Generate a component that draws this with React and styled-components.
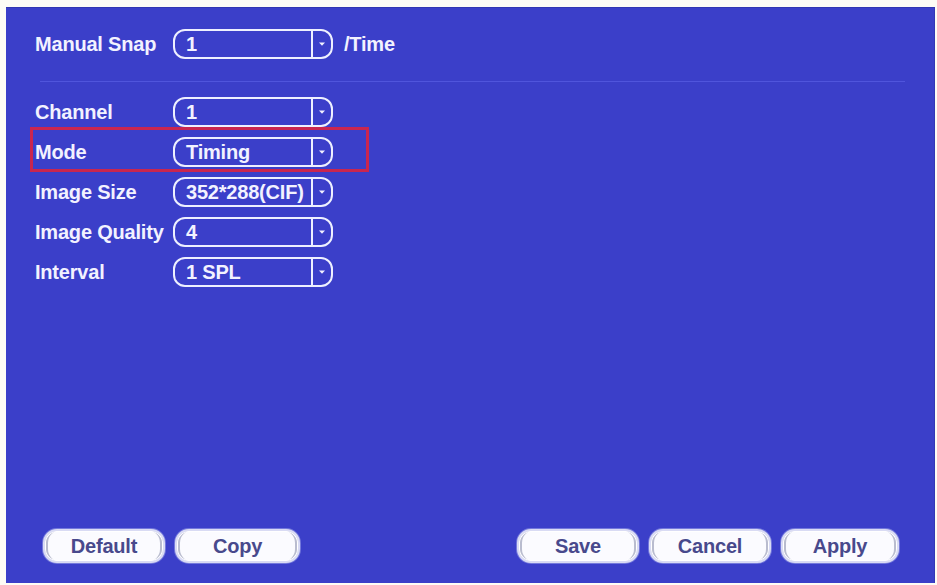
import styled, { createGlobalStyle } from "styled-components";

const GlobalStyle = createGlobalStyle`
  html, body {
    margin: 0;
    padding: 0;
    background: #fdfcf6;
  }
  body {
    font-family: "Liberation Sans", Arial, sans-serif;
  }
`;

const Screen = styled.div`
  width: 937px;
  height: 585px;
  box-sizing: border-box;
  padding: 7px 2px 2px 6px;
  background: #fdfcf6;
`;

const Panel = styled.div`
  height: 576px;
  box-sizing: border-box;
  display: flex;
  flex-direction: column;
  background: #3b3fc9;
  border-top: 1px solid #3236b2;
  border-right: 1px solid #3337b4;
  padding: 0 35px 20px 29px;
`;

const TopRow = styled.div`
  display: flex;
  align-items: center;
  height: 30px;
  margin-top: 21px;
`;

const Divider = styled.div`
  height: 1px;
  margin: 22px -6px 1px 5px;
  background: #5055dc;
`;

const Rows = styled.div`
  display: flex;
  flex-direction: column;
  gap: 10px;
  margin-top: 14px;
`;

const Row = styled.div`
  position: relative;
  display: flex;
  align-items: center;
  height: 30px;
`;

const Text = styled.span`
  color: #f2f2ff;
  font-size: 20px;
  font-weight: bold;
  letter-spacing: -0.2px;
  white-space: nowrap;
`;

const Label = styled(Text)`
  width: 138px;
  flex: none;
`;

const Select = styled.div`
  width: 160px;
  height: 30px;
  box-sizing: border-box;
  display: flex;
  border: 2px solid #eef0ff;
  border-radius: 12px;
  overflow: hidden;
`;

const SelectValue = styled(Text)`
  flex: 1;
  display: flex;
  align-items: center;
  padding-left: 11px;
`;

const SelectArrow = styled.span`
  width: 18px;
  flex: none;
  display: flex;
  align-items: center;
  justify-content: center;
  border-left: 2px solid #eef0ff;
`;

const Suffix = styled(Text)`
  margin-left: 11px;
`;

const Highlight = styled.div`
  position: absolute;
  left: -5px;
  top: -10px;
  width: 339px;
  height: 45px;
  box-sizing: border-box;
  border: 3px solid #c9264f;
  pointer-events: none;
`;

const ButtonBar = styled.div`
  display: flex;
  justify-content: space-between;
  margin-top: auto;
  padding-left: 8px;
`;

const ButtonGroup = styled.div`
  display: flex;
  gap: 10px;
`;

const Button = styled.button`
  width: ${p => p.$width || 122}px;
  height: 34px;
  box-sizing: border-box;
  padding: 0;
  border: 2px solid #d9dbf4;
  border-radius: 14px;
  background: #fbfbff;
  box-shadow: 0 0 0 1px #7479dc, inset 0 0 0 1px #ffffff, inset 4px 0 0 -1px #b9bccf,
    inset -4px 0 0 -1px #b9bccf;
  color: #48498c;
  font-family: "Liberation Sans", Arial, sans-serif;
  font-size: 20px;
  font-weight: bold;
  letter-spacing: -0.2px;
`;

const Arrow = () => (
  <svg width="8" height="6" viewBox="0 0 8 6">
    <path d="M1 1.5 H7 L4 4.8 Z" fill="#f2f2ff" />
  </svg>
);

const Dropdown = ({ value }) => (
  <Select>
    <SelectValue>{value}</SelectValue>
    <SelectArrow>
      <Arrow />
    </SelectArrow>
  </Select>
);

const fields = [
  { label: "Channel", value: "1" },
  { label: "Mode", value: "Timing", marked: true },
  { label: "Image Size", value: "352*288(CIF)" },
  { label: "Image Quality", value: "4" },
  { label: "Interval", value: "1 SPL" },
];

export default function App() {
  return (
    <>
      <GlobalStyle />
      <Screen>
        <Panel>
          <TopRow>
            <Label>Manual Snap</Label>
            <Dropdown value="1" />
            <Suffix>/Time</Suffix>
          </TopRow>
          <Divider />
          <Rows>
            {fields.map(({ label, value, marked }) => (
              <Row key={label}>
                <Label>{label}</Label>
                <Dropdown value={value} />
                {marked && <Highlight />}
              </Row>
            ))}
          </Rows>
          <ButtonBar>
            <ButtonGroup>
              <Button>Default</Button>
              <Button $width={125}>Copy</Button>
            </ButtonGroup>
            <ButtonGroup>
              <Button>Save</Button>
              <Button>Cancel</Button>
              <Button $width={118}>Apply</Button>
            </ButtonGroup>
          </ButtonBar>
        </Panel>
      </Screen>
    </>
  );
}
